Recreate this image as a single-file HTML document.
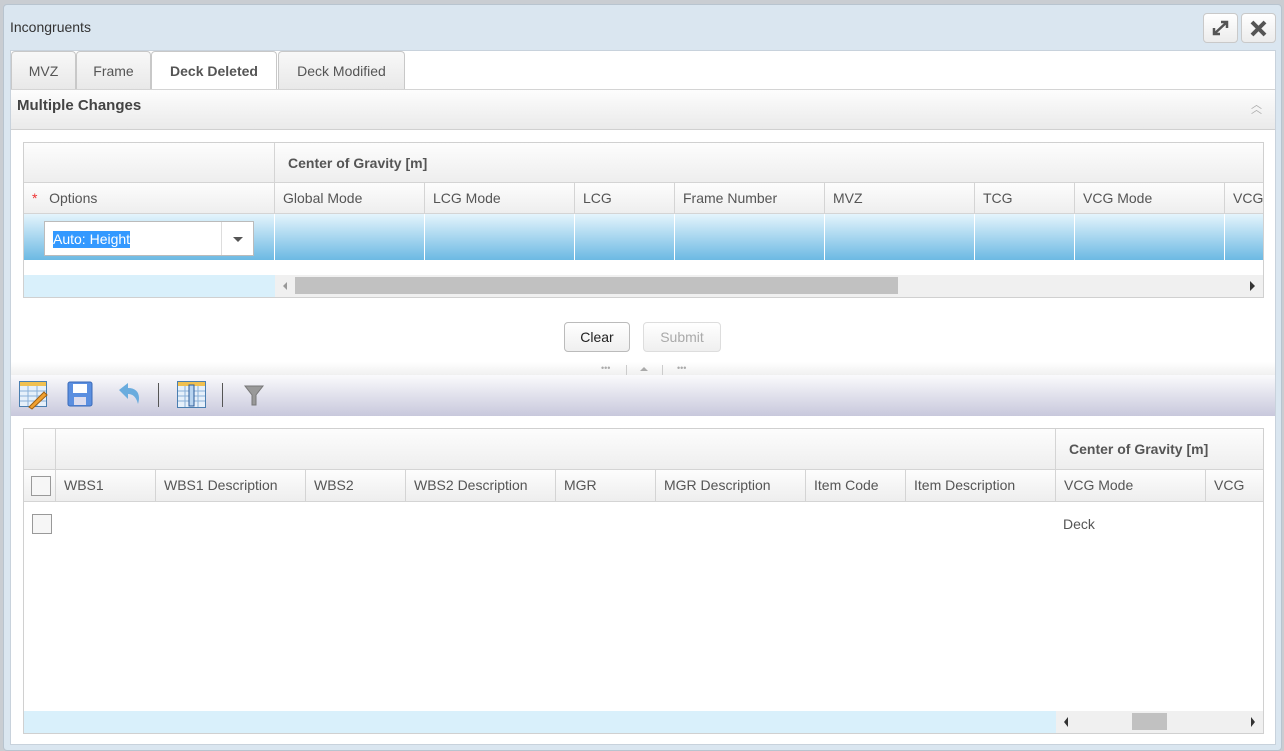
<!DOCTYPE html><html><head><style>
*{box-sizing:border-box;margin:0;padding:0}
body{width:1284px;height:751px;background:#c9cdd2;font-family:"Liberation Sans",sans-serif;font-size:14px;color:#555;position:relative;overflow:hidden}
.a{position:absolute}
.win{left:3px;top:4px;width:1279px;height:747px;background:#dae6f0;border:1px solid #b8c4cf;border-radius:4px}
.tb{border:1px solid #c9c9c9;border-radius:4px;background:linear-gradient(#fff,#ececec)}
.tab{top:51px;height:39px;border:1px solid #c8c8c8;border-bottom:none;border-radius:4px 4px 0 0;background:linear-gradient(#f8f8f8,#e8e8e8);text-align:center;line-height:38px;font-size:14px;color:#555}
.hd{flex-shrink:0;background:linear-gradient(#fdfdfd,#eeeeee);border-right:1px solid #d4d4d4;border-bottom:1px solid #d4d4d4;height:100%;padding-left:8px;line-height:30px;white-space:nowrap;overflow:hidden}
.row{display:flex}
.bt{border:1px solid #bbb;border-radius:4px;background:linear-gradient(#fff,#efefef);text-align:center;line-height:28px}
.cb{width:20px;height:20px;border:1px solid #999;background:#f6f6f6}
</style></head><body>
<div class="a win"></div>
<div class="a" style="left:10px;top:19px;color:#333">Incongruents</div>
<div class="a tb" style="left:1203px;top:13px;width:35px;height:30px"><svg width="33" height="28"><path d="M10 20 L23 8 M17 8 H23 V14 M10 14 V20 H16" stroke="#555" stroke-width="2.5" fill="none"/></svg></div>
<div class="a tb" style="left:1241px;top:13px;width:35px;height:30px"><svg width="33" height="28"><path d="M10 8 L23 21 M23 8 L10 21" stroke="#555" stroke-width="4"/></svg></div>
<div class="a" style="left:10px;top:50px;width:1266px;height:695px;background:#fff;border:1px solid #c8d2dc"></div>
<div class="a tab" style="left:11px;width:65px">MVZ</div>
<div class="a tab" style="left:76px;width:75px">Frame</div>
<div class="a tab" style="left:151px;width:126px;background:#fff;font-weight:bold;height:40px">Deck Deleted</div>
<div class="a tab" style="left:278px;width:127px">Deck Modified</div>
<div class="a" style="left:11px;top:89px;width:1264px;height:41px;background:linear-gradient(#fdfdfd,#eaeaea);border-top:1px solid #d4d4d4;border-bottom:1px solid #d0d0d0"></div>
<div class="a" style="left:17px;top:97px;font-weight:bold;font-size:15px;color:#444">Multiple Changes</div>
<div class="a" style="left:1251px;top:103px;color:#aaa;font-size:11px;line-height:5px">︿<br>︿</div>

<div class="a" style="left:23px;top:142px;width:1241px;height:156px;border:1px solid #d0d0d0;overflow:hidden">
 <div class="row" style="height:40px"><div class="hd" style="width:251px"></div><div class="hd" style="width:990px;padding-left:13px;line-height:40px;font-weight:bold;color:#555">Center of Gravity [m]</div></div>
 <div class="row" style="height:31px"><div class="hd" style="width:251px"><span style="color:#e33">*</span>&nbsp;&nbsp; Options</div><div class="hd" style="width:150px">Global Mode</div><div class="hd" style="width:150px">LCG Mode</div><div class="hd" style="width:100px">LCG</div><div class="hd" style="width:150px">Frame Number</div><div class="hd" style="width:150px">MVZ</div><div class="hd" style="width:100px">TCG</div><div class="hd" style="width:150px">VCG Mode</div><div class="hd" style="width:60px">VCG</div></div>
 <div style="height:46px;background:linear-gradient(#e4f4fc,#6cb9e3);position:relative">
  <div class="a" style="left:250px;top:0;width:1px;height:46px;background:#fff;box-shadow:150px 0 #fff,300px 0 #fff,400px 0 #fff,550px 0 #fff,700px 0 #fff,800px 0 #fff,950px 0 #fff"></div>
  <div class="a" style="left:20px;top:7px;width:210px;height:35px;background:#fff;border:1px solid #bbb"><span style="position:absolute;left:8px;top:9px;background:#3399ff;color:#fff;line-height:17px">Auto: Height</span><div class="a" style="left:176px;top:0;width:32px;height:33px;border-left:1px solid #ddd"><div class="a" style="left:11px;top:15px;border:5px solid transparent;border-top:5px solid #555"></div></div></div>
 </div>
 <div class="a" style="left:0;top:132px;width:251px;height:22px;background:#d9f0fb"></div>
 <div class="a" style="left:251px;top:132px;width:990px;height:22px;background:#f0f0f0"><div class="a" style="left:20px;top:2px;width:603px;height:17px;background:#c1c1c1"></div><div class="a" style="left:8px;top:7px;border:4px solid transparent;border-right:4px solid #999;border-left:none"></div><div class="a" style="right:10px;top:6px;border:5px solid transparent;border-left:5px solid #333;border-right:none"></div></div>
</div>

<div class="a bt" style="left:564px;top:322px;width:66px;height:30px;color:#222">Clear</div>
<div class="a bt" style="left:643px;top:322px;width:78px;height:30px;color:#aaa;border-color:#ddd">Submit</div>
<div class="a" style="left:11px;top:362px;width:1264px;height:13px;background:linear-gradient(#fff,#f0f0f0)"></div>
<div class="a" style="left:601px;top:363px;font-size:9px;color:#aaa">•••</div><div class="a" style="left:626px;top:365px;width:1px;height:10px;background:#ccc"></div><div class="a" style="left:640px;top:367px;border:4px solid transparent;border-bottom:4px solid #aaa;border-top:none"></div><div class="a" style="left:662px;top:365px;width:1px;height:10px;background:#ccc"></div><div class="a" style="left:677px;top:363px;font-size:9px;color:#aaa">•••</div>

<div class="a" style="left:11px;top:375px;width:1264px;height:41px;background:linear-gradient(#fafafc,#c8c8dc)"></div>
<svg class="a" style="left:19px;top:380px" width="250" height="30">
 <rect x="0.5" y="1.5" width="27" height="25" fill="#e6f0fa" stroke="#4a7eb0"/><rect x="1" y="2" width="26" height="4" fill="#f0c050"/><path d="M1 11H27M1 16H27M1 21H27M9 6V26M18 6V26" stroke="#8ab0d8"/><path d="M10 27 L25 12 L28 15 L13 29Z" fill="#f0a030" stroke="#a06010"/>
 <rect x="49" y="2" width="24" height="24" rx="2" fill="#5b8fe0" stroke="#3a6ab8"/><rect x="54" y="4" width="14" height="9" fill="#fff"/><rect x="55" y="17" width="12" height="8" fill="#dde"/>
 <path d="M100 10 L109 3 V8 C118 8 122 14 119 24 C117 16 113 14 109 14 V19Z" fill="#6aacde"/>
 <rect x="139" y="3" width="1" height="24" fill="#555"/>
 <rect x="158.5" y="1.5" width="28" height="26" fill="#e6f0fa" stroke="#4a7eb0"/><rect x="159" y="2" width="27" height="4" fill="#f0c050"/><path d="M159 11H186M159 16H186M159 21H186M166 6V27M179 6V27" stroke="#8ab0d8"/><rect x="170" y="5" width="5" height="21" fill="#b8d4f0" stroke="#2a5a98"/>
 <rect x="203" y="3" width="1" height="24" fill="#555"/>
 <path d="M226 6 H244 L237 15 V25 H233 V15Z" fill="#999" stroke="#777"/>
</svg>

<div class="a" style="left:23px;top:428px;width:1241px;height:306px;border:1px solid #d0d0d0;overflow:hidden">
 <div class="row" style="height:41px"><div class="hd" style="width:32px"></div><div class="hd" style="width:1000px"></div><div class="hd" style="width:209px;padding-left:13px;line-height:41px;font-weight:bold">Center of Gravity [m]</div></div>
 <div class="row" style="height:32px"><div class="hd" style="width:32px;padding:6px 0 0 7px"><div class="cb"></div></div><div class="hd" style="width:100px">WBS1</div><div class="hd" style="width:150px">WBS1 Description</div><div class="hd" style="width:100px">WBS2</div><div class="hd" style="width:150px">WBS2 Description</div><div class="hd" style="width:100px">MGR</div><div class="hd" style="width:150px">MGR Description</div><div class="hd" style="width:100px">Item Code</div><div class="hd" style="width:150px">Item Description</div><div class="hd" style="width:150px">VCG Mode</div><div class="hd" style="width:60px">VCG</div></div>
 <div class="a cb" style="left:8px;top:85px"></div>
 <div class="a" style="left:1039px;top:87px">Deck</div>
 <div class="a" style="left:0;top:282px;width:1032px;height:22px;background:#d9f0fb"></div>
 <div class="a" style="left:1032px;top:282px;width:209px;height:22px;background:#f0f0f0"><div class="a" style="left:76px;top:2px;width:35px;height:17px;background:#c1c1c1"></div><div class="a" style="left:8px;top:6px;border:5px solid transparent;border-right:4px solid #333;border-left:none"></div><div class="a" style="right:10px;top:6px;border:5px solid transparent;border-left:4px solid #333;border-right:none"></div></div>
</div>
</body></html>
